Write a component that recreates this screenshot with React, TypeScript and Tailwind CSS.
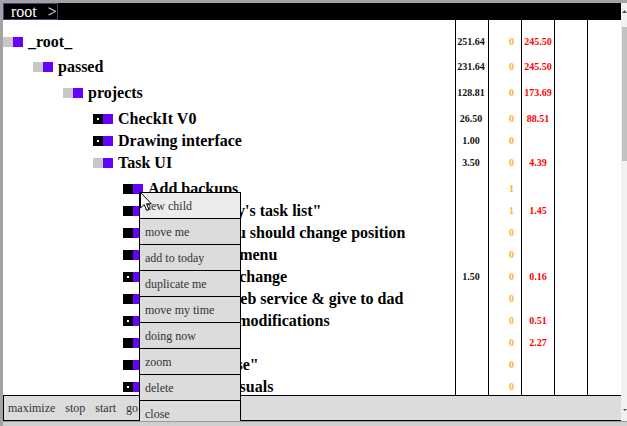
import React from "react";

type Kind = "gray" | "dot" | "black";
type Row = { depth: number; label: string; kind: Kind; mt: string; a: string; b: string; c: string };

const rows: Row[] = [
  { depth: 0, label: "_root_", kind: "gray", mt: "mt-[11px]", a: "251.64", b: "0", c: "245.50" },
  { depth: 1, label: "passed", kind: "gray", mt: "mt-[3px]", a: "231.64", b: "0", c: "245.50" },
  { depth: 2, label: "projects", kind: "gray", mt: "mt-[4px]", a: "128.81", b: "0", c: "173.69" },
  { depth: 3, label: "CheckIt V0", kind: "dot", mt: "mt-[4px]", a: "26.50", b: "0", c: "88.51" },
  { depth: 3, label: "Drawing interface", kind: "dot", mt: "", a: "1.00", b: "0", c: "" },
  { depth: 3, label: "Task UI", kind: "gray", mt: "", a: "3.50", b: "0", c: "4.39" },
  { depth: 4, label: "Add backups", kind: "black", mt: "mt-[4px]", a: "", b: "1", c: "" },
  { depth: 4, label: "Create \"today's task list\"", kind: "black", mt: "", a: "", b: "1", c: "1.45" },
  { depth: 4, label: "If marked you should change position", kind: "black", mt: "", a: "", b: "0", c: "" },
  { depth: 4, label: "Add the task menu", kind: "black", mt: "", a: "", b: "0", c: "" },
  { depth: 4, label: "Save data on change", kind: "dot", mt: "", a: "1.50", b: "0", c: "0.16" },
  { depth: 4, label: "Turn into a web service & give to dad", kind: "black", mt: "", a: "", b: "0", c: "" },
  { depth: 4, label: "Undo + redo modifications", kind: "dot", mt: "", a: "", b: "0", c: "0.51" },
  { depth: 4, label: "Shortcuts", kind: "black", mt: "", a: "", b: "0", c: "2.27" },
  { depth: 4, label: "Rename \"close\"", kind: "black", mt: "", a: "", b: "0", c: "" },
  { depth: 4, label: "Update the visuals", kind: "dot", mt: "", a: "", b: "0", c: "" },
];

const indent = ["pl-0", "pl-[30px]", "pl-[60px]", "pl-[90px]", "pl-[120px]"];

const menuItems = [
  "new child",
  "move me",
  "add to today",
  "duplicate me",
  "move my time",
  "doing now",
  "zoom",
  "delete",
  "close",
];

function NodeIcon({ kind }: { kind: Kind }) {
  return (
    <div className="flex shrink-0">
      {kind === "gray" ? (
        <div className="w-[10px] h-[10px] bg-[#c8c8c8]" />
      ) : (
        <div className="w-[10px] h-[10px] bg-black flex items-center justify-center">
          {kind === "dot" && <div className="w-[2px] h-[2px] bg-white" />}
        </div>
      )}
      <div className="w-[10px] h-[10px] bg-[#6600ff]" />
    </div>
  );
}

function Col({
  values,
  width,
  cellClass,
}: {
  values: string[];
  width: string;
  cellClass: string;
}) {
  return (
    <div className={`${width} shrink-0 border-l border-black flex flex-col`}>
      {rows.map((r, i) => (
        <div
          key={i}
          className={`h-[22px] shrink-0 leading-[22px] text-[10px] font-bold whitespace-nowrap ${r.mt} ${cellClass}`}
        >
          {values[i]}
        </div>
      ))}
    </div>
  );
}

export default function App() {
  return (
    <div className="w-[627px] h-[426px] overflow-hidden bg-white border-t-[3px] border-l-[3px] border-[#a3a3a3] flex flex-col font-['Liberation_Serif','Times_New_Roman',serif]">
      <div className="flex h-[418px] shrink-0">
        {/* inner viewport */}
        <div className="w-[618px] h-[418px] relative overflow-hidden flex flex-col bg-white shrink-0">
          {/* header */}
          <div className="h-[17px] bg-black flex shrink-0">
            <div className="w-[55px] h-[17px] border border-[#483d8b] text-white text-[16px] leading-[15px] pl-[7px] flex whitespace-nowrap">
              <span>root</span>
              <span className="ml-[11px]">&gt;</span>
            </div>
          </div>

          {/* main table */}
          <div className="flex h-[375px] shrink-0 overflow-hidden">
            <div className="w-[452px] shrink-0 flex flex-col overflow-hidden">
              {rows.map((r, i) => (
                <div
                  key={i}
                  className={`h-[22px] shrink-0 flex items-center gap-[5px] ${r.mt} ${indent[r.depth]}`}
                >
                  <NodeIcon kind={r.kind} />
                  <span className="text-[16px] font-bold leading-[22px] text-black whitespace-nowrap">
                    {r.label}
                  </span>
                </div>
              ))}
            </div>
            <Col values={rows.map((r) => r.a)} width="w-[33px]" cellClass="text-center pr-[2px] text-[#111]" />
            <Col values={rows.map((r) => r.b)} width="w-[33px]" cellClass="text-right pr-[7px] text-[#ffb22e]" />
            <Col values={rows.map((r) => r.c)} width="w-[33px]" cellClass="text-center text-[#ff0000]" />
            <Col values={rows.map(() => "")} width="w-[33px]" cellClass="" />
            <Col values={rows.map(() => "")} width="w-[34px]" cellClass="" />
          </div>

          {/* bottom bar */}
          <div className="h-[26px] shrink-0 bg-[#dcdcdc] border-t border-b border-l border-black flex items-center pl-[4px] gap-[10px] text-[12px] text-[#333]">
            <span>maximize</span>
            <span>stop</span>
            <span>start</span>
            <span>go up</span>
          </div>

          {/* context menu */}
          <div className="absolute left-[136px] top-[189px] w-[102px] border-x border-b border-black flex flex-col">
            {menuItems.map((m, i) => (
              <div
                key={m}
                className={`h-[26px] border-t border-black flex items-center pl-[5px] text-[12px] text-[#333] ${
                  i === 0 ? "bg-[#ececec]" : "bg-[#dcdcdc]"
                }`}
              >
                {m}
              </div>
            ))}
          </div>

          {/* mouse cursor */}
          <svg
            className="absolute left-[137px] top-[189px]"
            width="13"
            height="20"
            viewBox="0 0 13 20"
          >
            <path
              d="M0.5 0.5 L0.5 16 L4.2 12.5 L6.8 18.5 L9 17.5 L6.5 11.8 L11.3 11.8 Z"
              fill="#ffffff"
              stroke="#000000"
              strokeWidth="1"
              strokeLinejoin="miter"
            />
          </svg>
        </div>

        {/* scrollbar (partially visible) */}
        <div className="w-[6px] h-[418px] bg-[#f1f1f1] flex flex-col shrink-0">
          <div className="h-[24px] shrink-0 flex justify-end pt-[7px] pr-[0px]">
            <svg width="5" height="3" viewBox="0 0 5 3">
              <polygon points="2.5,0 5,3 0,3" fill="#505050" />
            </svg>
          </div>
          <div className="h-[134px] ml-[1px] bg-[#c1c1c1] shrink-0" />
          <div className="flex-1" />
          <div className="h-[12px] shrink-0 flex justify-end pt-0">
            <svg width="4" height="2" viewBox="0 0 4 2">
              <polygon points="0,0 4,0 2,2" fill="#505050" />
            </svg>
          </div>
        </div>
      </div>
      <div className="h-[5px] shrink-0 bg-[#cfcfcf] border-t border-[#9a9a9a]" />
    </div>
  );
}
